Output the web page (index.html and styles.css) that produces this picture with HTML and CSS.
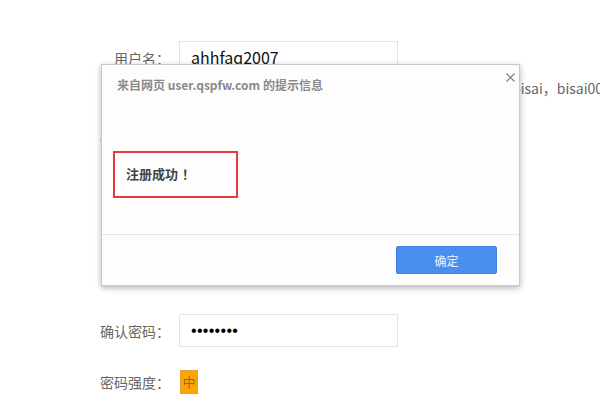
FILE: index.html
```html
<!DOCTYPE html>
<html lang="zh-CN">
<head>
  <meta charset="UTF-8" />
  <title>注册</title>
  <link rel="stylesheet" href="styles.css">
</head>
<body>

  <div class="reg-form">
    <div class="row">
      <span class="label">用户名：</span>
      <div class="input">ahhfaq2007</div>
    </div>
    <p class="hint">该用户名已被注册，推荐使用：bisai，bisai001</p>
    <div class="row row-pwd">
      <span class="label">设置密码：</span>
      <div class="input dots">••••••••</div>
    </div>
    <div class="row row-confirm">
      <span class="label">确认密码：</span>
      <div class="input dots">••••••••</div>
    </div>
    <div class="row row-level">
      <span class="label">密码强度：</span>
      <span class="level">中</span>
    </div>
  </div>

  <div class="dialog">
    <div class="dialog-head">
      <span class="dialog-title">来自网页 user.qspfw.com 的提示信息</span>
      <span class="dialog-close">
        <svg width="9" height="9" viewBox="0 0 9 9"><path d="M0.5 0.5L8.5 8.5M8.5 0.5L0.5 8.5" stroke="#777" stroke-width="1.1" fill="none"/></svg>
      </span>
    </div>
    <div class="dialog-body">
      <div class="msg">注册成功<span class="bang">！</span></div>
    </div>
    <div class="dialog-foot">
      <button class="btn-ok">确定</button>
    </div>
  </div>

</body>
</html>
```

FILE: styles.css
```css
body {
  margin: 0;
  padding: 0;
  background-color: #fff;
  font-family: "Microsoft YaHei", "Noto Sans CJK SC", sans-serif;
  color: #666;
  width: 600px;
  height: 399px;
  overflow: hidden;
  position: relative;
}

.reg-form {
  padding-top: 41px;
}

.row {
  display: flex;
  align-items: center;
  height: 33px;
}

.label {
  width: 179px;
  padding-right: 9px;
  box-sizing: border-box;
  text-align: right;
  font-size: 14px;
  color: #666;
}

.input {
  width: 219px;
  height: 33px;
  border: 1px solid #e3e3e3;
  box-sizing: border-box;
  padding-left: 11px;
  line-height: 31px;
  font-size: 16px;
  color: #111;
}

.dots {
  font-family: "Liberation Sans", Arial, sans-serif;
  font-size: 16px;
  letter-spacing: 0.3px;
  color: #000;
}

.hint {
  margin: 4px 0 0 0;
  padding-left: 316px;
  font-size: 14px;
  line-height: 20px;
  color: #666;
  white-space: nowrap;
}

.row-pwd {
  margin-top: 25px;
}

.row-confirm {
  margin-top: 158px;
}

.row-level {
  margin-top: 23px;
  height: 24px;
}

.level {
  width: 18px;
  height: 24px;
  margin-left: 1px;
  background-color: #ffa500;
  border: 1px solid #e0a040;
  box-sizing: border-box;
  color: #8a6a30;
  font-size: 13px;
  line-height: 22px;
  text-align: center;
}

.dialog {
  position: absolute;
  left: 101px;
  top: 64px;
  width: 419px;
  height: 222px;
  background-color: #fdfdfd;
  border: 1px solid #c9c9c9;
  box-sizing: border-box;
  box-shadow: 0 2px 6px rgba(0, 0, 0, 0.3);
  display: flex;
  flex-direction: column;
}

.dialog-head {
  display: flex;
  justify-content: space-between;
  padding: 8px 4px 0 15px;
  height: 40px;
  box-sizing: border-box;
}

.dialog-title {
  margin-top: 3px;
  font-size: 12px;
  font-weight: bold;
  color: #8a8a8a;
}

.dialog-close {
  width: 9px;
  height: 9px;
}

.dialog-close svg {
  display: block;
}

.dialog-body {
  flex-grow: 1;
  padding: 46px 0 0 11px;
  border-bottom: 1px solid #e6e6e6;
}

.msg {
  width: 125px;
  height: 47px;
  border: 2px solid #e8383b;
  box-sizing: border-box;
  padding-left: 11px;
  line-height: 41px;
  font-size: 13px;
  font-weight: bold;
  color: #444;
}

.bang {
  margin-left: 4px;
}

.dialog-foot {
  display: flex;
  justify-content: flex-end;
  padding: 11px 22px 0 0;
  height: 50px;
  box-sizing: border-box;
}

.btn-ok {
  width: 101px;
  height: 28px;
  background-color: #4a8ff0;
  border: 1px solid #3f82de;
  border-radius: 2px;
  color: #eef4ff;
  font-family: inherit;
  font-size: 12px;
}
```
